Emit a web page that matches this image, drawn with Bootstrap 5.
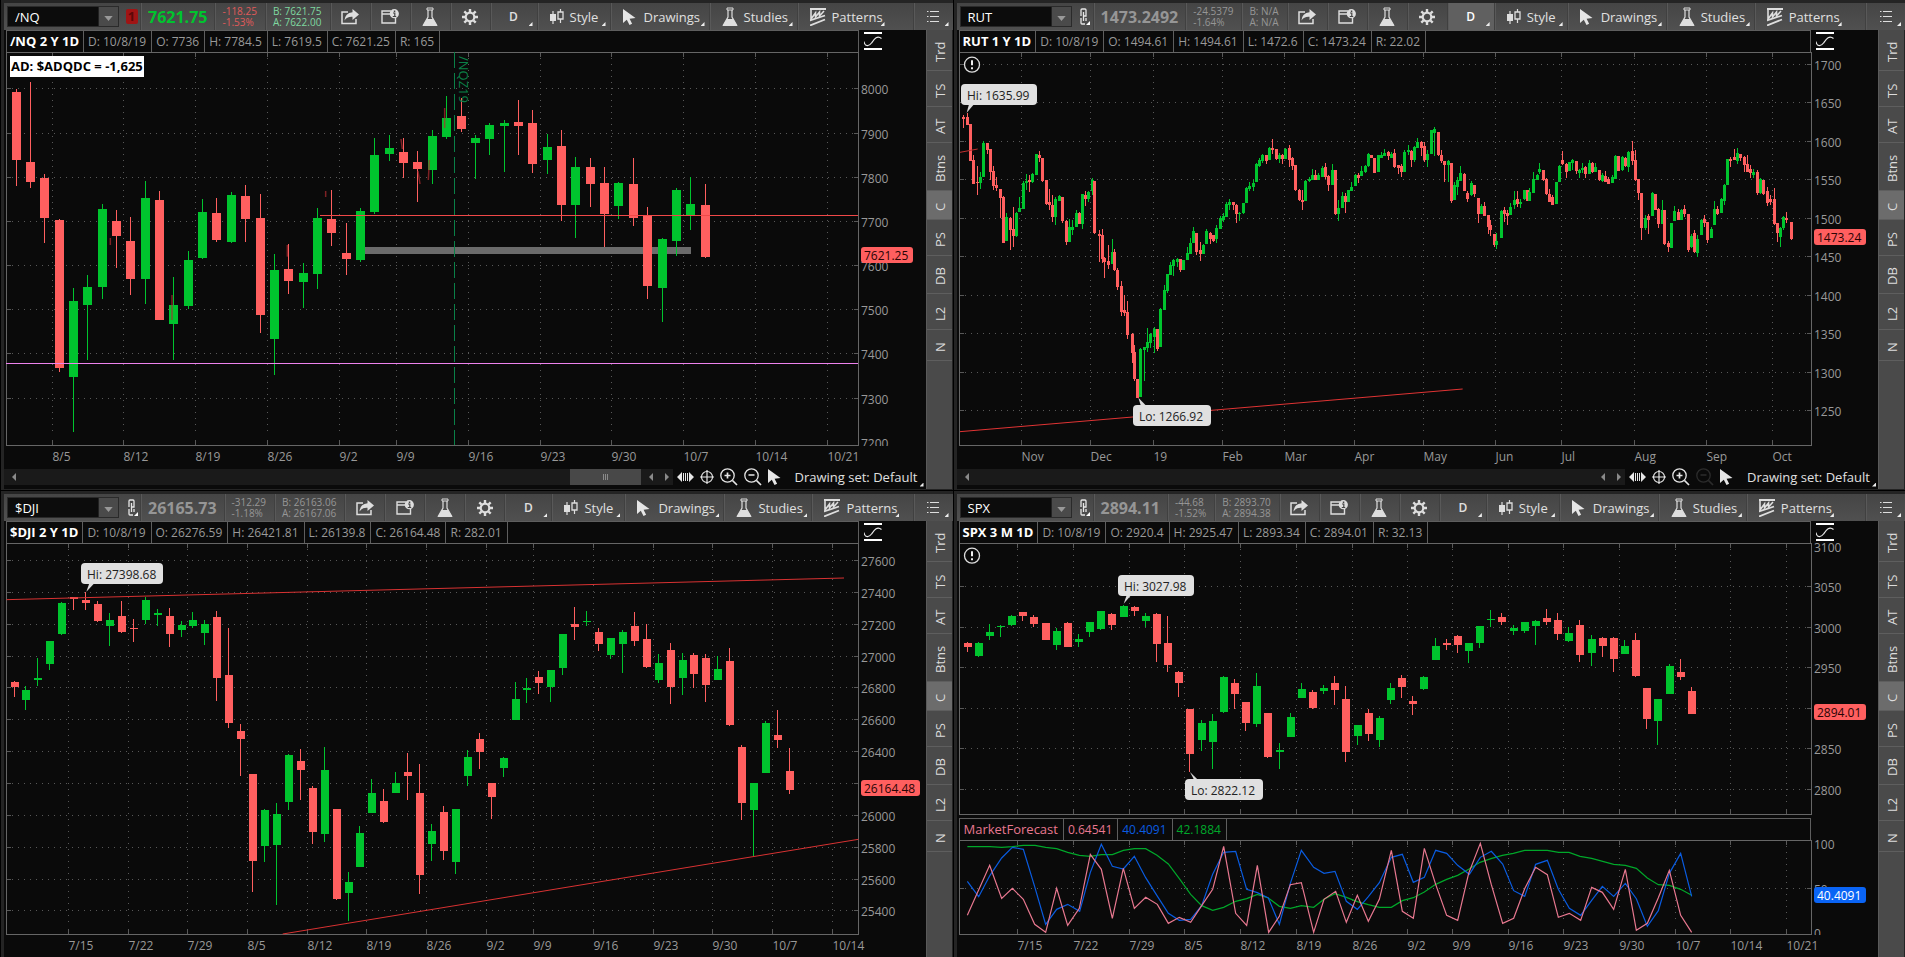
<!DOCTYPE html>
<html lang="en">
<head>
<meta charset="utf-8">
<meta name="viewport" content="width=device-width, initial-scale=1">
<title>Charts</title>
<link href="https://cdn.jsdelivr.net/npm/bootstrap@5.3.0/dist/css/bootstrap.min.css" rel="stylesheet">
<style>
:root{--bar:#4a4a4a;--ink:#0a0a0a;--rule:#5e5e5e;--up:#00c42e;--down:#ff5f5f;--txt:#e0e0e0;--dim:#999}
body{background:#000;color:var(--txt);font-family:"Open Sans","Noto Sans",sans-serif;font-size:13px;line-height:16px}
.board{display:grid;min-height:100vh;grid-template-columns:repeat(2,minmax(0,1fr));grid-template-rows:491fr 466fr}
.pane{background:#242424;padding:3px 0 0 3px;border-left:1px solid #000;min-height:0}
.board .pane:nth-child(-n+2){padding-bottom:1px;border-bottom:1px solid #000}
.tools{height:27px;background:linear-gradient(#454545,#505050);padding-left:3px}
.tools button,.side button,.foot button,.glyph-btn{background:none;border:0;color:inherit;padding:0;position:relative}
.tools .cell{border-left:1px solid #404040;box-shadow:inset 1px 0 #595959;flex:none;display:flex;align-items:center}
.sym{width:112px;height:21px;border:1px solid #2a2a2a;background:#0c0c0c}
.sym input{width:0;background:none;border:0;color:#fff;outline:0;padding:0 0 0 7px;font-size:13px}
.sym button{width:20px;background:#4a4a4a;border-left:1px solid #222}
.linkbtn{width:17px;height:27px}
.badge-one{background:#a01414;color:#5c0808;width:12px;height:15px;border-radius:2px;font-weight:700;line-height:15px}
.price{font-weight:700;font-size:16px;padding:0 7px}
.tiny{font-size:10px;line-height:11px;padding:0 8px 0 7px;white-space:pre}
.tools .ico{width:40px;justify-content:center}
.tools .per{width:47px;justify-content:center;font-weight:600;font-size:12px}
.tools .per.on{background:#606060;color:#fff}
.corner::after{content:"";position:absolute;right:4px;bottom:4px;width:4px;height:4px;background:#eee;clip-path:polygon(100% 0,100% 100%,0 100%)}
.w-style{width:73px}.w-draw{width:99px}.w-study{width:88px}.w-pat{width:92px}
.tools .lab{padding-left:12px;gap:6px}
.tools .lab.w-draw{gap:8px}
.lab svg{flex:none}
.chart{background:var(--ink);padding-left:2px}
.ohlc{height:22px;min-height:22px;padding-right:67px;position:relative}
.cells{border:1px solid var(--rule);border-bottom:0;height:22px}
.cells span{border-right:1px solid var(--rule);padding:0 5px 0 4px;font-size:12px;line-height:21px;color:var(--dim);white-space:nowrap}
.cells .name{color:#fff;font-weight:700;font-size:13px;padding:0 4px 0 3px}
.cells.study span{padding:0 5px 0 4px}
.cells.study span:first-child{font-size:13px}
.glyph-btn.scale{position:absolute;right:44px;top:0;line-height:0;padding-top:2px}
.plot{min-height:0;position:relative}
.plot>svg{display:block;position:absolute;inset:0;width:100%;height:100%;overflow:visible}
.h393{flex:393 1 0}.h275{flex:275 1 0}.h117{flex:117 1 0}
.side{width:26px;flex:none;background:var(--bar);border-left:1px solid #5a5a5a;margin-right:1px}
.side button{writing-mode:vertical-rl;transform:rotate(180deg);border-top:1px solid #5e5e5e;padding-bottom:4px;color:#dcdcdc;display:flex;align-items:center;justify-content:center;line-height:24px}
.side button.on{background:#6c6c6c}
.t41{height:41px}.t36{height:36px}.t48{height:48px}.t29{height:29px}.t38{height:38px}.t31{height:31px}
.foot{height:17px;min-height:17px;margin:0 0 4px -2px}
.track{background:#1a1a1a;height:16px}
.thumb{width:71px;height:16px;background:#484848}
.foot .acts{width:253px;flex:none;gap:6px}
.foot .acts svg{display:block}
.foot .set{text-align:left;white-space:nowrap;padding-left:8px;height:16px}
.foot .set::after{right:2px;bottom:-2px}
.foot .off{opacity:.15}
text{font-family:"Open Sans","Noto Sans",sans-serif;font-size:12px}
</style>
</head>
<body>
<svg width="0" height="0" class="position-absolute" aria-hidden="true">
<defs>
<symbol id="i-down" viewBox="0 0 10 6"><path d="M0 0h10L5 6z" fill="#999"/></symbol>
<symbol id="i-link" viewBox="0 0 12 18"><g fill="none" stroke="#e6e6e6" stroke-width="1.300"><path d="M3 8V2q0-1 1-1h3q1 0 1 1v6h-2M3 10v5q0 1 1 1h3M8 10v3"/><path d="M5.500 4v9"/></g><path d="M12 13v4H8z" fill="#fff"/></symbol>
<symbol id="i-share" viewBox="0 0 18 16"><path d="M7 3H1v11.500h14V10" fill="none" stroke="#dedede" stroke-width="1.500"/><path d="M11.500 0 18 5.500 11.500 11V7.800Q6 7.400 3.500 11.500 4 4 11.500 3.300z" fill="#dedede"/></symbol>
<symbol id="i-note" viewBox="0 0 18 15"><path d="M10 2H1v12h13.500V9M1 5h8" fill="none" stroke="#dedede" stroke-width="1.400"/><circle cx="13.300" cy="4.700" r="4.600" fill="#dedede"/><path d="M12 4h1.800v3.500M11.800 7.500h3.400" stroke="#444" stroke-width="1.200" fill="none"/><path d="M12.800 1.500h1.500V3h-1.500z" fill="#444"/></symbol>
<symbol id="i-flask" viewBox="0 0 16 20"><path d="M5 1h6v2H5z" fill="none" stroke="#dedede"/><path d="M6 3v7L1.500 18h13L10 10V3" fill="none" stroke="#dedede" stroke-width="1.200"/><path d="M5 12h6l4.500 7H.5z" fill="#dedede"/></symbol>
<symbol id="i-gear" viewBox="0 0 16 16"><circle cx="8" cy="8" r="4.300" fill="none" stroke="#dedede" stroke-width="2.200"/><path d="M8 0v3M8 13v3M0 8h3M13 8h3M2.300 2.300l2.200 2.200M11.500 11.500l2.200 2.200M2.300 13.700l2.200-2.200M11.500 4.500l2.200-2.200" stroke="#dedede" stroke-width="2.400"/></symbol>
<symbol id="i-candle" viewBox="0 0 14 16"><path d="M3 2v13M10.500 0v14" stroke="#dedede" stroke-width="1.200"/><path d="M0 5h6v7H0z" fill="#dedede"/><path d="M8 3h5v7H8z" fill="#4a4a4a" stroke="#dedede" stroke-width="1.300"/></symbol>
<symbol id="i-arrow" viewBox="0 0 13 16"><path d="M0 0v14l3.800-3.300L6.500 16l2.600-1.300-2.500-5L12.500 9z" fill="#e6e6e6"/></symbol>
<symbol id="i-pat" viewBox="0 0 16 18"><path d="M0 1h16M0 12.500 15 7.500M0 17.500 15 11.500" stroke="#dedede" stroke-width="1.800"/><path d="M1 2v9l4.500-6v4l4-5v4L14 3" fill="none" stroke="#dedede" stroke-width="1.600"/></symbol>
<symbol id="i-list" viewBox="0 0 12 14"><path d="M0 1.500h1.500M0 6.500h1.500M0 11.500h1.500M3 1.500h9M3 6.500h9M3 11.500h9" stroke="#dedede"/></symbol>
<symbol id="i-wave" viewBox="0 0 18 18"><path d="M0 1h18M0 17h18" stroke="#fff" stroke-width="2"/><path d="M0 9.500C1 15 5 14.500 7.500 11S13 2.500 17.500 6.500" fill="none" stroke="#e6e6e6" stroke-width="1.200"/></symbol>
<symbol id="i-exp" viewBox="0 0 17 12"><path d="M0 6l5-5v10zM17 6l-5-5v10z" fill="#e6e6e6"/><path d="M6.500 2v8M8.500 2v8M10.500 2v8" stroke="#e6e6e6" stroke-width="1"/></symbol>
<symbol id="i-cross" viewBox="0 0 14 14"><circle cx="7" cy="7" r="5.500" fill="none" stroke="#e6e6e6" stroke-width="1.200"/><path d="M7 0v14M0 7h14" stroke="#e6e6e6" stroke-width="1.200"/></symbol>
<symbol id="i-in" viewBox="0 0 18 18"><circle cx="7.500" cy="7.500" r="6.700" fill="none" stroke="#e6e6e6" stroke-width="1.300"/><path d="M12.500 12.500 17 17M4.500 7.500h6M7.500 4.500v6" stroke="#e6e6e6" stroke-width="1.700"/></symbol>
<symbol id="i-out" viewBox="0 0 18 18"><circle cx="7.500" cy="7.500" r="6.700" fill="none" stroke="#e6e6e6" stroke-width="1.300"/><path d="M12.500 12.500 17 17M4.500 7h6" stroke="#e6e6e6" stroke-width="1.700"/></symbol>
<symbol id="i-l" viewBox="0 0 4 8"><path d="M4 0v8L0 4z" fill="#8a8a8a"/></symbol>
<symbol id="i-r" viewBox="0 0 4 8"><path d="M0 0v8l4-4z" fill="#8a8a8a"/></symbol>
</defs>
</svg>
<main class="board" id="board"></main>
<script src="https://cdn.jsdelivr.net/npm/bootstrap@5.3.0/dist/js/bootstrap.bundle.min.js"></script>
<script>
// Candle rows are "x high top bottom low side", in thirds of a pixel on the base grid.
const NQ = `49 266 276 480 557 r,91 246 486 546 563 r,133 522 534 654 730 r,178 657 660 1104 1115 r,220 865 903 1131 1295 g,262 825 861 915 1079 g,307 612 627 861 897 g,349 630 663 708 803 r,391 651 723 837 885 r,436 543 594 837 911 g,478 573 600 960 960 r,520 831 915 972 1079 g,565 753 780 918 927 g,607 597 636 774 777 g,649 594 639 720 726 r,694 576 585 726 729 g,736 555 588 657 725 r,781 582 654 945 999 r,823 762 810 1017 1125 g,865 732 807 843 881 r,910 788 819 846 924 g,952 624 654 822 867 g,994 570 657 699 738 r,1039 668 759 777 825 r,1081 624 633 780 786 g,1123 414 465 636 642 g,1168 405 444 462 483 g,1210 414 456 489 534 r,1252 453 486 507 606 r,1297 390 408 510 552 g,1339 288 354 411 417 g,1384 294 348 387 396 r,1426 405 414 430 537 g,1468 369 375 417 465 g,1513 360 369 378 516 g,1555 300 366 378 465 r,1597 330 369 492 519 r,1642 402 441 480 522 g,1684 390 438 615 663 r,1726 471 501 615 713 g,1771 474 501 552 621 r,1813 501 549 642 742 r,1855 546 549 618 657 g,1900 474 552 654 678 r,1942 621 648 858 897 r,1987 714 717 864 965 g,2029 564 570 723 767 g,2071 531 612 645 690 g,2116 552 615 771 774 r`;
const DJI = `45 573 576 591 621 r,77 588 600 630 660 g,113 504 564 570 588 g,149 453 453 522 540 g,185 336 339 432 435 g,221 321 321 326 360 r,257 307 330 339 360 r,293 333 342 393 396 r,329 369 390 408 468 g,365 333 378 426 429 r,401 387 414 417 456 r,437 321 330 390 402 g,473 357 369 375 408 g,509 354 378 432 471 r,545 393 405 420 441 g,578 366 390 408 414 g,614 390 402 429 465 g,650 363 381 564 633 r,686 414 555 699 714 r,722 702 723 747 858 r,758 852 852 1113 1206 r,795 957 960 1068 1116 g,831 939 972 1065 1245 g,867 792 795 936 960 g,903 777 813 840 930 r,938 888 894 1026 1062 r,974 771 840 1032 1056 g,1010 957 957 1227 1230 r,1046 1146 1176 1209 1293 g,1080 1008 1029 1131 1131 g,1116 867 909 969 969 g,1152 897 933 996 999 r,1187 846 879 909 909 g,1223 789 846 858 930 r,1259 822 909 1155 1212 r,1295 1002 1023 1062 1113 g,1331 948 966 1083 1110 r,1367 957 957 1116 1152 g,1403 780 801 858 888 g,1439 729 747 786 837 r,1476 879 879 921 987 r,1511 801 804 834 861 g,1547 576 627 690 690 g,1581 564 594 600 639 g,1616 543 561 579 612 r,1652 540 540 591 636 g,1688 432 432 534 555 g,1724 351 402 411 450 r,1760 363 393 396 408 g,1796 414 426 462 483 r,1832 444 444 495 507 g,1868 420 426 462 549 g,1904 366 408 453 468 r,1940 402 447 531 534 r,1976 492 519 570 579 g,2012 459 480 591 642 r,2048 489 510 564 615 g,2081 489 495 552 594 r,2117 492 504 585 636 r,2153 498 537 570 570 g,2189 474 513 705 708 r,2225 765 771 939 990 r,2261 879 879 960 1098 g,2297 693 699 849 849 g,2333 660 735 750 774 r,2369 774 843 900 912 r`;
const SPX = `54 456 459 471 486 r,87 456 459 498 501 g,120 402 426 438 449 g,152 405 409 412 440 g,186 375 378 405 408 g,219 366 366 378 393 r,252 375 381 402 411 r,288 399 399 450 450 r,321 414 423 465 480 g,354 396 399 471 471 r,386 432 447 456 470 g,420 396 396 426 440 g,453 363 363 417 420 g,486 369 372 405 420 r,522 345 348 381 381 g,555 348 351 363 378 r,587 369 378 393 411 g,621 369 372 462 516 r,653 378 459 525 546 r,687 543 546 579 621 r,720 657 657 792 846 r,756 690 699 750 783 g,789 672 693 756 837 g,822 558 561 666 669 g,855 567 579 612 657 r,888 636 636 699 722 r,921 549 588 702 711 g,954 669 669 801 804 r,989 759 780 786 837 g,1023 669 681 741 741 g,1056 579 597 624 624 g,1089 600 606 654 657 r,1122 585 594 603 612 g,1155 558 579 600 645 r,1188 588 627 786 816 r,1224 705 705 738 765 g,1257 657 669 732 753 r,1290 678 684 750 771 g,1323 579 594 630 642 g,1356 555 564 591 624 r,1389 618 633 642 675 r,1422 558 561 597 600 g,1458 444 468 510 510 g,1491 447 459 465 480 r,1524 435 438 465 489 r,1557 459 459 483 519 g,1590 408 408 459 474 g,1622 360 387 390 411 g,1656 369 381 396 405 r,1691 405 414 423 435 g,1725 396 396 423 428 g,1758 390 393 408 465 g,1791 357 384 396 405 r,1824 369 390 432 450 r,1857 411 429 453 456 g,1890 390 405 495 516 r,1926 435 447 489 527 g,1959 441 444 468 501 r,1992 441 444 507 546 r,2025 450 468 492 492 g,2058 429 450 558 561 r,2091 594 594 687 717 r,2124 627 627 693 765 g,2160 522 528 612 612 g,2193 507 546 561 570 r,2226 591 603 672 672 r`;
const RUT = `40 345 351 357 384 r,50 339 351 375 375 r,59 372 372 483 483 r,68 465 480 552 552 r,80 498 546 549 584 r,89 516 531 549 568 g,98 423 429 531 531 g,110 429 429 450 462 r,119 447 447 516 540 r,128 498 513 558 570 r,137 530 554 564 572 r,149 567 567 594 654 r,158 588 591 729 729 r,167 640 651 723 723 g,180 651 654 691 749 r,188 621 688 708 742 r,197 636 639 708 711 g,208 591 625 635 636 g,218 543 549 627 627 g,227 522 543 548 570 g,236 525 541 546 575 r,247 519 522 546 549 g,257 462 462 525 525 g,266 453 465 474 486 r,277 474 474 543 546 r,287 540 540 612 615 r,296 567 606 615 630 r,305 585 615 651 667 r,316 591 597 651 675 g,326 584 588 603 603 g,335 591 591 663 669 r,347 660 663 726 735 r,356 657 681 726 726 g,365 660 681 690 706 g,377 630 639 681 681 g,386 636 639 672 672 r,395 582 582 672 687 g,404 573 585 597 618 r,415 573 576 598 606 g,425 534 540 573 584 g,433 543 543 700 702 r,446 690 702 708 786 r,455 687 705 777 789 r,463 770 775 787 833 r,475 735 783 795 807 r,485 718 756 792 792 g,493 747 756 810 813 r,502 805 810 861 870 r,514 843 858 935 948 r,523 885 930 939 948 r,532 902 936 1005 1016 r,545 998 1002 1059 1088 r,553 1036 1056 1137 1143 r,562 1137 1137 1193 1193 r,571 1044 1047 1190 1190 g,583 1040 1041 1050 1142 g,592 985 1026 1044 1055 g,601 998 1002 1029 1045 g,613 982 987 1011 1058 g,622 987 987 1047 1052 r,631 924 927 1041 1041 g,643 855 870 930 930 g,652 822 822 873 880 g,661 786 795 825 825 g,670 776 780 798 828 g,682 773 777 785 800 g,691 777 777 810 815 r,700 780 780 810 810 g,712 740 759 780 780 g,721 715 729 762 762 g,730 681 693 730 730 g,739 699 700 756 765 r,751 725 749 762 782 r,760 732 735 762 762 g,769 687 693 732 732 g,781 696 700 718 732 r,790 705 705 722 726 r,799 675 684 718 730 g,811 648 654 687 687 g,820 640 648 660 665 g,829 607 612 651 651 g,838 597 606 614 630 g,850 606 606 614 630 r,859 612 615 642 668 r,868 636 639 642 662 g,880 609 609 640 642 g,889 561 564 609 609 g,898 546 558 567 573 g,910 540 549 560 573 g,919 489 492 546 546 g,928 474 480 498 500 g,937 462 465 483 490 g,949 465 465 483 492 r,958 441 444 479 479 g,967 417 445 450 462 r,979 447 447 477 480 r,988 460 465 477 488 g,997 463 465 477 492 r,1006 444 447 477 477 g,1018 435 444 479 500 r,1027 470 474 498 510 r,1036 495 495 570 573 r,1048 567 570 600 603 r,1057 570 600 606 630 r,1066 540 543 603 603 g,1078 531 537 543 546 g,1087 507 525 540 540 g,1096 510 525 540 540 r,1105 520 525 540 540 g,1117 498 504 531 531 g,1126 489 501 531 537 r,1135 525 528 555 573 r,1147 492 510 556 556 g,1156 510 510 642 645 r,1165 600 624 642 663 g,1177 576 588 624 624 g,1186 580 588 606 640 r,1195 570 570 606 606 g,1204 546 561 573 573 g,1216 522 525 558 558 g,1225 520 525 534 549 r,1234 498 513 528 528 g,1246 495 497 516 518 g,1255 459 462 498 500 g,1264 464 465 474 474 r,1273 474 474 519 519 r,1285 465 465 516 516 g,1294 456 465 474 474 g,1303 447 459 468 468 g,1315 453 456 468 480 r,1324 456 462 474 474 g,1333 447 459 501 504 r,1345 495 495 504 522 r,1354 492 498 516 530 r,1363 450 456 516 516 g,1375 435 450 457 465 g,1384 450 453 480 501 r,1393 438 441 480 486 g,1402 414 426 444 444 g,1414 423 426 444 468 r,1423 426 438 480 486 r,1432 450 462 480 500 g,1442 390 390 462 462 g,1453 381 387 400 468 g,1463 396 396 465 468 r,1472 450 465 483 489 r,1483 483 483 495 546 r,1493 480 483 495 546 g,1502 489 489 603 609 r,1513 546 555 600 600 g,1522 531 540 560 584 g,1531 498 520 543 543 g,1541 519 522 573 573 r,1552 573 579 597 606 r,1562 543 549 585 588 g,1571 555 555 582 590 r,1583 594 594 642 669 r,1592 612 618 642 642 g,1601 606 618 648 648 r,1613 645 645 680 702 r,1621 660 675 690 708 r,1632 702 702 735 741 r,1639 700 723 735 747 g,1652 630 633 713 715 g,1661 621 630 642 665 r,1670 630 638 648 675 r,1681 609 621 645 645 g,1691 573 600 615 627 g,1700 573 597 612 620 r,1709 597 606 612 624 g,1723 570 570 597 600 g,1730 570 570 603 603 r,1738 564 576 603 603 g,1750 516 537 579 579 g,1760 522 525 540 540 g,1768 489 507 516 522 g,1780 510 510 540 543 r,1789 534 537 582 585 r,1798 567 582 606 606 r,1807 585 591 615 615 r,1819 546 546 612 612 g,1828 495 498 546 546 g,1837 453 480 492 495 r,1849 488 492 516 534 r,1858 486 486 513 513 g,1867 477 479 490 510 g,1879 483 483 513 522 r,1888 507 510 519 534 g,1897 489 504 510 519 g,1906 498 501 522 534 r,1918 480 489 522 522 g,1927 486 489 516 519 r,1936 489 501 516 516 g,1948 510 510 540 543 r,1957 519 525 543 546 g,1966 513 528 546 546 r,1975 530 537 552 553 r,1987 525 531 549 549 g,1996 465 468 537 537 g,2005 468 468 513 513 r,2017 468 471 510 513 g,2026 471 474 498 501 r,2035 453 456 501 516 g,2047 423 453 483 495 r,2056 450 480 540 543 r,2065 537 537 579 600 r,2074 579 579 684 720 r,2086 645 654 684 690 g,2095 642 648 660 702 r,2105 576 579 648 648 g,2116 582 582 630 630 r,2125 624 627 672 684 r,2135 600 630 672 672 g,2143 630 630 732 735 r,2155 722 729 742 756 r,2164 669 669 744 744 g,2173 618 633 663 663 g,2185 627 636 660 660 r,2194 627 630 660 660 g,2203 615 627 642 651 r,2215 642 642 750 755 r,2224 702 708 742 744 g,2233 690 700 756 760 r,2242 705 717 760 770 g,2254 657 660 705 705 g,2263 645 657 669 680 r,2272 666 666 720 729 r,2284 681 687 714 714 g,2293 603 627 675 675 g,2302 618 627 643 645 r,2314 594 597 639 639 g,2323 552 555 603 615 g,2332 477 477 555 555 g,2341 471 477 482 501 r,2353 447 471 480 480 r,2362 444 459 483 492 g,2371 462 462 475 483 r,2383 468 471 495 516 r,2392 465 492 516 516 r,2401 495 507 519 534 r,2410 507 516 525 534 g,2422 510 516 579 585 r,2431 534 537 579 582 g,2440 540 540 582 585 r,2452 561 573 609 618 r,2461 585 597 606 615 r,2471 564 597 672 675 r,2482 669 669 700 726 r,2491 681 684 711 742 g,2500 648 651 684 690 g,2509 636 654 660 669 r,2522 666 666 717 720 r`;
const MF_G = '52,1070 120,1070 155,1072 187,1070 220,1066 255,1066 287,1072 320,1076 353,1087 388,1096 421,1099 454,1094 487,1094 520,1081 553,1076 587,1076 621,1096 655,1122 688,1166 722,1213 755,1247 788,1261 821,1252 857,1234 890,1226 922,1213 955,1224 988,1249 1021,1255 1054,1247 1091,1252 1122,1228 1155,1211 1189,1222 1222,1235 1255,1244 1288,1252 1324,1252 1357,1232 1390,1223 1423,1206 1457,1183 1490,1168 1523,1156 1556,1138 1590,1117 1623,1106 1657,1096 1690,1090 1724,1081 1792,1081 1826,1087 1857,1087 1890,1099 1925,1105 1991,1123 2026,1126 2059,1135 2092,1164 2125,1184 2158,1186 2192,1198 2225,1216';
const MF_B = '52,1174 86,1220 120,1156 155,1104 187,1072 220,1078 254,1190 287,1303 320,1258 353,1243 389,1264 421,1147 454,1063 487,1129 520,1137 553,1099 587,1163 621,1217 655,1270 688,1291 722,1288 755,1247 788,1153 821,1087 857,1084 890,1198 922,1208 955,1224 988,1303 1021,1180 1054,1081 1091,1132 1122,1150 1155,1144 1189,1234 1222,1258 1255,1220 1288,1178 1324,1102 1357,1093 1390,1177 1423,1162 1457,1081 1490,1090 1523,1126 1558,1153 1591,1102 1624,1084 1658,1122 1691,1202 1724,1219 1757,1123 1792,1111 1825,1198 1858,1255 1892,1276 1925,1231 1957,1189 1991,1219 2026,1180 2059,1226 2092,1309 2125,1262 2158,1150 2192,1090 2225,1219';
const MF_P = '52,1276 119,1126 155,1225 187,1195 220,1228 254,1303 287,1327 320,1195 353,1306 388,1255 421,1093 454,1138 487,1285 520,1135 553,1255 587,1222 622,1243 655,1300 688,1282 722,1297 755,1247 788,1198 821,1069 857,1270 890,1306 922,1126 956,1327 988,1279 1021,1184 1054,1178 1091,1327 1122,1228 1157,1204 1189,1297 1222,1216 1255,1294 1288,1228 1324,1081 1357,1264 1390,1285 1423,1075 1457,1183 1490,1276 1523,1291 1556,1150 1591,1060 1624,1184 1658,1300 1691,1285 1724,1196 1757,1132 1792,1154 1825,1282 1858,1270 1892,1291 1925,1192 1957,1207 1991,1258 2026,1138 2059,1321 2092,1300 2125,1223 2158,1141 2192,1276 2225,1327';
const spxX = [[202,'7/15'],[370,'7/22'],[538,'7/29'],[703,'8/5'],[871,'8/12'],[1039,'8/19'],[1207,'8/26'],[1372,'9/2'],[1507,'9/9'],[1675,'9/16'],[1840,'9/23'],[2008,'9/30'],[2176,'10/7'],[2341,'10/14'],[2509,'10/21']];

const plots = {
 nq:{x0:18,y0:156,base:393,pad:23,w:9,candles:NQ,
  xs:[[157,'8/5'],[370,'8/12'],[586,'8/19'],[802,'8/26'],[1018,'9/2'],[1189,'9/9'],[1405,'9/16'],[1621,'9/23'],[1834,'9/30'],[2050,'10/7'],[2266,'10/14'],[2482,'10/21']],
  ys:[[265,'8000'],[400,'7900'],[532,'7800'],[664,'7700'],[796,'7600'],[928,'7500'],[1060,'7400'],[1195,'7300'],[1327,'7200']],
  band:[1095,741,2072,762],
  lines:[[960,646,2574,646,'#f04848'],[18,1090,2574,1090,'#ee82ee']],
  marks:[[331,714,331,735],[862,735,862,770],[516,885,516,960],[977,573,977,591],[1334,324,1334,384],[1203,417,1207,447],[1254,513,1260,552],[1288,480,1285,540]],
  expiry:[1363,'/NQZ19'], note:'AD: $ADQDC = -1,625', tag:[742,'7621.25',52,'r']},
 rut:{x0:27,y0:156,base:393,pad:23,w:3,candles:RUT,warn:194,
  xs:[[214,'Nov'],[421,'Dec'],[610,'19'],[817,'Feb'],[1003,'Mar'],[1213,'Apr'],[1420,'May'],[1636,'Jun'],[1834,'Jul'],[2053,'Aug'],[2269,'Sep'],[2467,'Oct']],
  ys:[[193,'1700'],[307,'1650'],[424,'1600'],[538,'1550'],[655,'1500'],[769,'1450'],[886,'1400'],[1000,'1350'],[1117,'1300'],[1231,'1250']],
  lines:[[30,457,83,447,'#c03030'],[30,1295,1538,1167,'#e03434']],
  calls:[[33,253,228,'Hi: 1635.99',57,72,50,338],[550,1216,233,'Lo: 1266.92',573,590,565,1193]], tag:[688,'1473.24',52,'r']},
 dji:{x0:18,y0:159,base:391,pad:23,w:8,candles:DJI,
  xs:[[205,'7/15'],[385,'7/22'],[562,'7/29'],[742,'8/5'],[922,'8/12'],[1099,'8/19'],[1279,'8/26'],[1459,'9/2'],[1600,'9/9'],[1780,'9/16'],[1960,'9/23'],[2137,'9/30'],[2317,'10/7'],[2497,'10/14']],
  ys:[[211,'27600'],[307,'27400'],[403,'27200'],[499,'27000'],[592,'26800'],[688,'26600'],[784,'26400'],[880,''],[976,'26000'],[1072,'25800'],[1168,'25600'],[1261,'25400']],
  lines:[[20,329,2532,264,'#d83232'],[848,1332,2575,1048,'#d83232']],
  calls:[[244,220,247,'Hi: 27398.68',268,283,259,305]], tag:[871,'26164.48',59,'r']},
 spx:{x0:27,y0:159,base:271,pad:4,w:8,candles:SPX,warn:197,nolabels:1,xs:spxX,
  ys:[[169,'3100',1],[289,'3050'],[412,'3000'],[532,'2950'],[655,''],[775,'2850'],[898,'2800']],lines:[],
  calls:[[505,256,227,'Hi: 3027.98',530,543,521,341],[706,868,233,'Lo: 2822.12',733,745,720,846]], tag:[643,'2894.01',52,'r']},
 mf:{x0:27,y0:1050,base:94,pad:23,w:8,candles:'',xs:spxX,ys:[[1060,'100',1],[1195,'50'],[1327,'0',1]],lines:[],
  polys:[[MF_G,'#00a82a'],[MF_B,'#0a5ce0'],[MF_P,'#e87890']], tag:[1192,'40.4091',52,'b']}
};

const ic = (n,w,h) => `<svg width="${w}" height="${h}" aria-hidden="true"><use href="#i-${n}"/></svg>`;
const panes = [
 {id:'nq',sym:'/NQ',px:'7621.75',pc:'#00c42e',ch:['-118.25','-1.53%'],cc:'#e05a5a',ba:['B: 7621.75','A: 7622.00'],bc:'#7fd8a0',one:1,foot:1,thumb:1,name:'/NQ 2 Y 1D',o:['D: 10/8/19','O: 7736','H: 7784.5','L: 7619.5','C: 7621.25','R: 165']},
 {id:'rut',sym:'RUT',px:'1473.2492',ch:['-24.5379','-1.64%'],ba:['B: N/A','A: N/A'],foot:1,on:1,name:'RUT 1 Y 1D',o:['D: 10/8/19','O: 1494.61','H: 1494.61','L: 1472.6','C: 1473.24','R: 22.02']},
 {id:'dji',sym:'$DJI',px:'26165.73',ch:['-312.29','-1.18%'],ba:['B: 26163.06','A: 26167.06'],name:'$DJI 2 Y 1D',o:['D: 10/8/19','O: 26276.59','H: 26421.81','L: 26139.8','C: 26164.48','R: 282.01']},
 {id:'spx',sym:'SPX',px:'2894.11',ch:['-44.68','-1.52%'],ba:['B: 2893.70','A: 2894.38'],study:1,name:'SPX 3 M 1D',o:['D: 10/8/19','O: 2920.4','H: 2925.47','L: 2893.34','C: 2894.01','R: 32.13']}
];
const tabs = [['Trd','t41'],['TS','t36'],['AT','t36'],['Btns','t48'],['C','t29 on'],['PS','t36'],['DB','t38'],['L2','t36'],['N','t31']];
const gray = '#969696';

document.getElementById('board').innerHTML = panes.map(p => `
<section class="pane d-flex flex-column" aria-label="${p.sym} chart">
 <div class="tools d-flex align-items-stretch flex-shrink-0">
  <div class="d-flex align-items-center flex-shrink-0"><div class="sym d-flex"><input class="flex-grow-1" type="text" value="${p.sym}" aria-label="Symbol ${p.sym}"><button type="button" aria-label="Symbol list">${ic('down',9,5)}</button></div>
  <button class="linkbtn d-flex align-items-center justify-content-center ms-1" type="button" aria-label="Link group">${p.one?'<span class="badge-one">1</span>':ic('link',12,18)}</button></div>
  <div class="cell price" style="color:${p.pc||gray}">${p.px}</div>
  <div class="cell tiny" style="color:${p.cc||gray}">${p.ch.join('\n')}</div>
  <div class="cell tiny" style="color:${p.bc||gray}">${p.ba.join('\n')}</div>
  <button type="button" class="cell ico" aria-label="Share">${ic('share',18,16)}</button>
  <button type="button" class="cell ico" aria-label="Notes">${ic('note',18,15)}</button>
  <button type="button" class="cell ico" aria-label="Quick study">${ic('flask',16,20)}</button>
  <button type="button" class="cell ico" aria-label="Settings">${ic('gear',16,16)}</button>
  <button type="button" class="cell per corner ${p.on?'on':''}">D</button>
  <button type="button" class="cell lab w-style corner">${ic('candle',14,16)}<span>Style</span></button>
  <button type="button" class="cell lab w-draw corner">${ic('arrow',13,16)}<span>Drawings</span></button>
  <button type="button" class="cell lab w-study corner">${ic('flask',16,20)}<span>Studies</span></button>
  <button type="button" class="cell lab w-pat corner">${ic('pat',16,18)}<span>Patterns</span></button>
  <button type="button" class="cell ico corner ms-auto" aria-label="Menu">${ic('list',12,14)}</button>
 </div>
 <div class="d-flex flex-grow-1">
  <div class="chart d-flex flex-column flex-grow-1">
   <div class="ohlc"><div class="cells d-flex"><span class="name">${p.name}</span>${p.o.map(t=>`<span>${t}</span>`).join('')}</div><button type="button" class="glyph-btn scale" aria-label="Scale mode">${ic('wave',18,18)}</button></div>
   <div class="plot ${p.study?'h275':'h393'}"><svg data-plot="${p.id}" role="img" aria-label="${p.name}"></svg></div>
   ${p.study?`<div class="ohlc"><div class="cells study d-flex"><span style="color:#e87890">MarketForecast</span><span style="color:#e87890">0.64541</span><span style="color:#0a5ce0">40.4091</span><span style="color:#00a82a">42.1884</span></div></div><div class="plot h117"><svg data-plot="mf" role="img" aria-label="MarketForecast"></svg></div>`:''}
   ${p.foot?`<div class="foot d-flex align-items-center"><div class="track d-flex align-items-center flex-grow-1 px-1"><button type="button" class="d-flex ps-1 me-auto" aria-label="Scroll left">${ic('l',4,8)}</button>${p.thumb?`<div class="thumb d-flex align-items-center justify-content-center"><svg width="5" height="6" aria-hidden="true"><path d="M.5 0v6M2.5 0v6M4.500 0v6" stroke="#8a8a8a"/></svg></div>`:''}<button type="button" class="d-flex px-2" aria-label="Step back">${ic('l',4,8)}</button><button type="button" class="d-flex ps-1" aria-label="Step forward">${ic('r',4,8)}</button></div>
   <div class="acts d-flex align-items-center ps-1"><button type="button" aria-label="Pan">${ic('exp',17,12)}</button><button type="button" aria-label="Crosshair">${ic('cross',14,14)}</button><button type="button" aria-label="Zoom in">${ic('in',18,18)}</button><button type="button" class="${p.thumb?'':'off'}" aria-label="Zoom out">${ic('out',18,18)}</button><button type="button" aria-label="Pointer">${ic('arrow',13,16)}</button><button type="button" class="set corner flex-grow-1">Drawing set: Default</button></div></div>`:''}
  </div>
  <nav class="side d-flex flex-column" aria-label="Side panels">${tabs.map(t=>`<button type="button" class="${t[1]}">${t[0]}</button>`).join('')}</nav>
 </div>
</section>`).join('');

function draw(svg){
 const o = plots[svg.dataset.plot], W = Math.round(svg.clientWidth), H = svg.clientHeight;
 const pw = W - 68, ph = Math.round(H - o.pad), sx = pw/852, sy = ph/o.base;
 const X = v => (v-o.x0)/3*sx, Y = v => (v-o.y0)/3*sy, R = Math.round, F = Math.floor;
 let s = '', g = '';
 o.xs.forEach(([x,t]) => {const a=F(X(x))+.5; g+=`<path d="M${a} 6V${ph-12}" stroke-dasharray="1 5"/><path d="M${a} 0v5M${a} ${ph-5}v5"/>`; if(!o.nolabels) s+=`<text x="${a}" y="${ph+16}" fill="#999">${t}</text>`;});
 o.ys.forEach(([y,t,hide]) => {const b=F(Y(y))+.5; if(!hide && b<ph-8) g+=`<path d="M6 ${b}H${pw-4}" stroke-dasharray="1 5"/><path d="M0 ${b}h5M${pw-4} ${b}h4"/>`;});
 s = `<g stroke="#585858" fill="none" shape-rendering="crispEdges">${g}<path d="M.5 0V${ph}M0 .5H${pw}M${pw+.5} 0V${ph+1}M0 ${ph+.5}H${pw+1}" stroke="#666"/></g>` + s;
 s += `<svg y="-8" width="${W}" height="${ph+9}" viewBox="0 -8 ${W} ${ph+9}" overflow="hidden">` + o.ys.map(([y,t])=>`<text x="${pw+3}" y="${R(Y(y)+6)}" fill="#999">${t}</text>`).join('') + '</svg>';
 if(o.band){const [a,b,c]=o.band; s+=`<rect x="${R(X(a))}" y="${R(Y(b))}" width="${R(X(c)-X(a))}" height="7" fill="#6b6b6b"/>`;}
 if(o.candles) o.candles.split(',').forEach(r => {const [x,h,t,b,l,c]=r.split(' '), L=R(X(+x))-F(o.w/2), k=c==='g'?'var(--up)':'var(--down)';
  const T=R(Y(+t)), B=Math.max(T+1,R(Y(+b))), hi=Math.min(T,R(Y(+h))), lo=Math.max(B,R(Y(+l)));
  s+=`<path shape-rendering="crispEdges" fill="${k}" d="M${L} ${T}h${o.w}V${B}h-${o.w}zM${L+F((o.w-1)/2)} ${hi}h1V${lo}h-1z"/>`;});
 o.lines.forEach(([a,b,c,d,k]) => {const f=b===d?F(Y(b))+.5:0; s+=`<path d="M${X(a)} ${f||Y(b)}L${X(c)} ${f||Y(d)}" stroke="${k}" stroke-width="1"/>`;});
 (o.marks||[]).forEach(([a,b,c,d]) => s+=`<path d="M${X(a)} ${Y(b)}L${X(c)} ${Y(d)}" stroke="#b02c30" stroke-width="1.500" opacity=".7"/>`);
 (o.polys||[]).forEach(([pts,k]) => s+=`<polyline fill="none" stroke="${k}" stroke-width="1.200" points="${pts.split(' ').map(q=>{const [x,y]=q.split(',');return X(+x)+','+Y(+y)}).join(' ')}"/>`);
 if(o.expiry){const a=F(X(o.expiry[0]))+.5; s+=`<path d="M${a} 0V${ph}" stroke="#0a8048" stroke-dasharray="16 5"/><text transform="translate(${a+4} 4) rotate(90)" fill="#0a8048" style="font-size:13px">${o.expiry[1]}</text>`;}
 if(o.note) s+=`<rect x="4" y="4" width="134" height="21" fill="#fff"/><text x="5" y="19" fill="#000" font-weight="700" style="font-size:13px">${o.note}</text>`;
 if(o.warn){const b=Y(o.warn); s+=`<circle cx="13" cy="${b}" r="7.500" fill="#0a0a0a" stroke="#ddd" stroke-width="1.300"/><path d="M13 ${b-4.5}v5M13 ${b+2.5}v2" stroke="#eee" stroke-width="2"/>`;}
 (o.calls||[]).forEach(([x,y,w,t,a,b,tx,ty]) => {const e=ty>y+30?Y(y)+20:Y(y)+1; s+=`<path d="M${X(a)} ${e}L${X(tx)} ${Y(ty)}L${X(b)} ${e}z" fill="#dcdcdc"/><rect x="${R(X(x))}" y="${R(Y(y))}" width="${R(w/3)}" height="21" rx="4" fill="#e0e0e0"/><text x="${R(X(x))+6}" y="${R(Y(y))+16}" fill="#222">${t}</text>`;});
 if(o.tag){const [y,t,w,c]=o.tag, b=R(Y(y)); s+=`<rect x="${pw+3}" y="${b}" width="${w}" height="16" rx="3" fill="${c==='r'?'#ff5f5f':'#0a64f5'}"/><text x="${pw+6}" y="${b+13}" fill="${c==='r'?'#2a0505':'#fff'}">${t}</text>`;}
 svg.innerHTML = s;
}
const drawAll = () => document.querySelectorAll('svg[data-plot]').forEach(draw);
drawAll();
addEventListener('resize', drawAll);
</script>
</body>
</html>
